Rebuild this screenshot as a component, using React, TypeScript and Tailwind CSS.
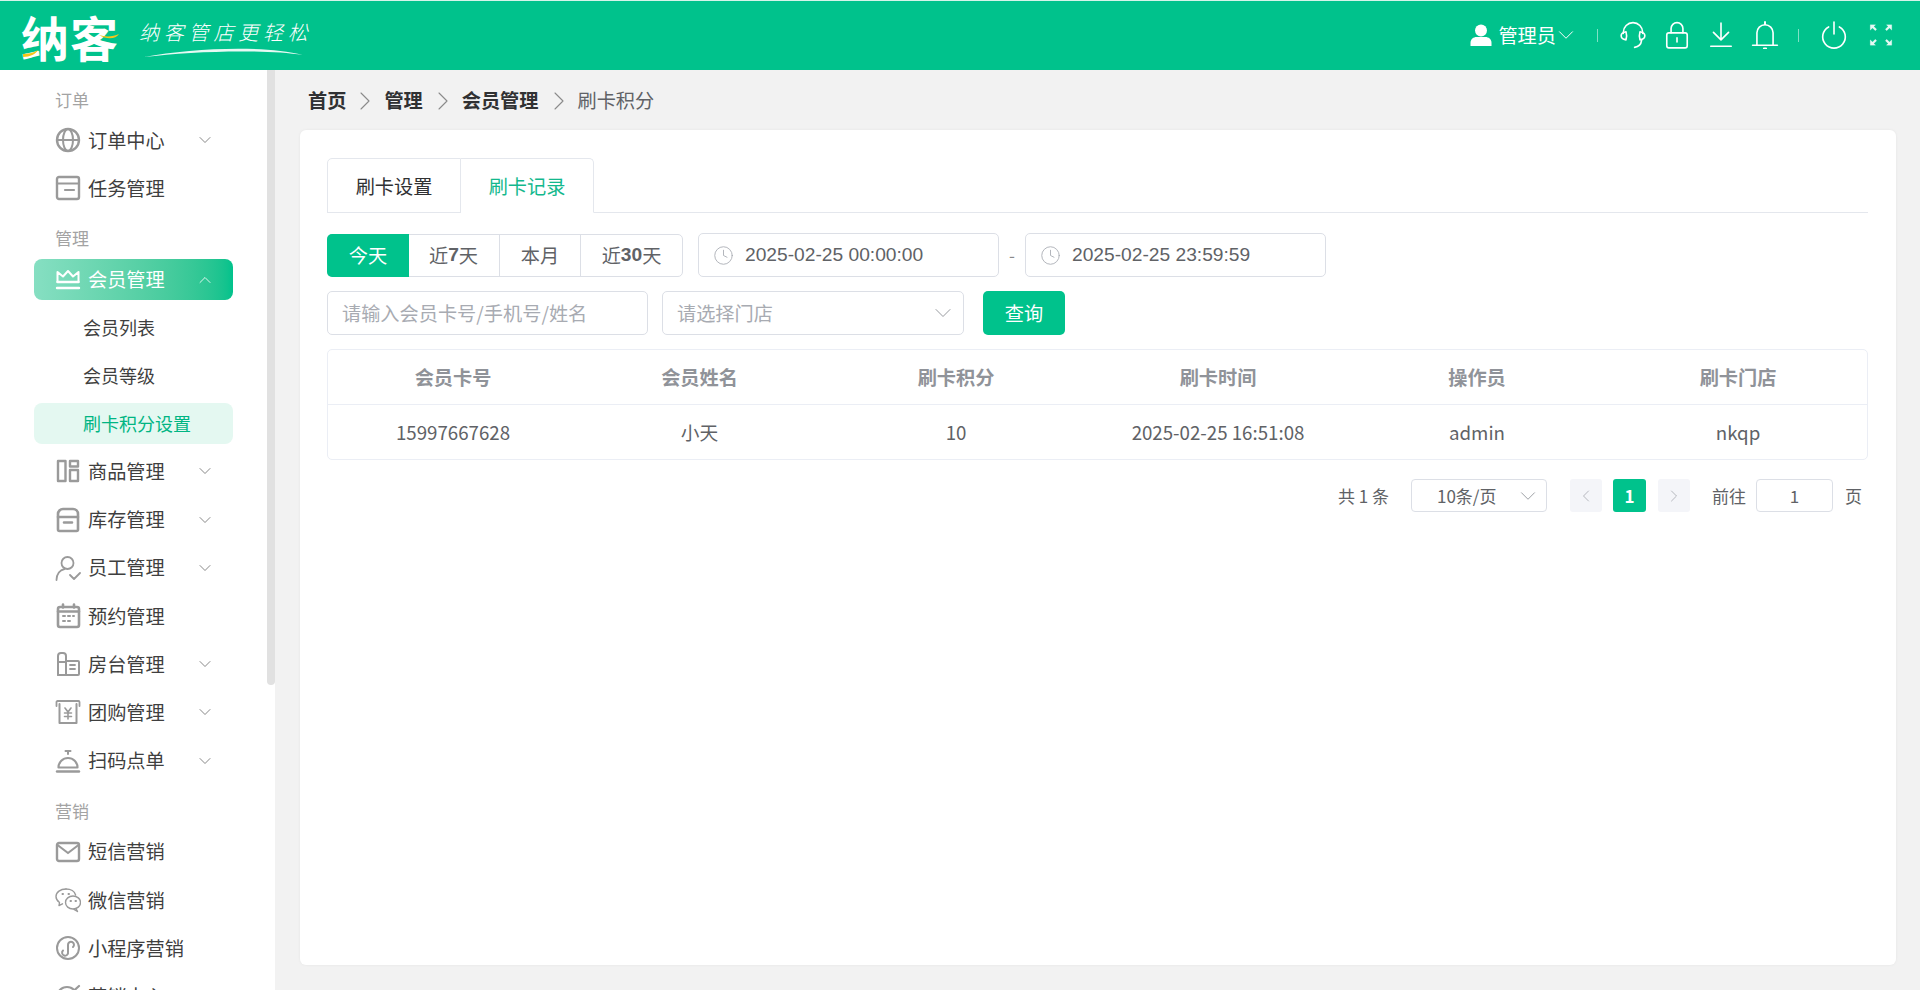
import { ChevronDown, ChevronLeft, ChevronRight, ChevronUp, Clock } from "lucide-react";
import type { ReactNode } from "react";

function Ic({ children, className = "text-[#9a9a9a]" }: { children: ReactNode; className?: string }) {
  return (
    <svg viewBox="0 0 26 26" width="26" height="26" fill="none" stroke="currentColor" strokeWidth="2" strokeLinecap="round" strokeLinejoin="round" className={`shrink-0 ${className}`}>
      {children}
    </svg>
  );
}

const GlobeIcon = () => (
  <Ic>
    <circle cx="13" cy="13" r="11" strokeWidth="2.4" />
    <ellipse cx="13" cy="13" rx="5" ry="11" strokeWidth="2" />
    <path d="M2 13h22" strokeWidth="2" />
  </Ic>
);
const TaskIcon = () => (
  <Ic>
    <rect x="2" y="2" width="22" height="22" rx="2" strokeWidth="2.4" />
    <path d="M2 8.500h22M10 15h9" strokeWidth="2.200" />
  </Ic>
);
const CrownIcon = () => (
  <Ic className="text-white">
    <path d="M2.500 15V5l5.500 4.500L13 4l5 5.500L23.500 5v10" strokeWidth="2" />
    <path d="M2.500 15h21M2 21h22" strokeWidth="2.400" />
  </Ic>
);
const GoodsIcon = () => (
  <Ic>
    <rect x="3" y="3" width="7.500" height="20" strokeWidth="2.400" />
    <rect x="15" y="3" width="8" height="5.500" strokeWidth="2.400" />
    <rect x="15" y="12" width="8" height="11" strokeWidth="2.400" />
  </Ic>
);
const BoxIcon = () => (
  <Ic>
    <path d="M3 10V7a5 5 0 0 1 5-5h10a5 5 0 0 1 5 5v3z" strokeWidth="2.600" />
    <path d="M3 10v12.500a1.500 1.500 0 0 0 1.500 1.500h17a1.500 1.500 0 0 0 1.500-1.500V10M9 15.500h8" strokeWidth="2.600" />
  </Ic>
);
const StaffIcon = () => (
  <Ic>
    <circle cx="12.500" cy="8" r="6" strokeWidth="1.800" />
    <path d="M1.500 25c0-6 3.500-10 8-11M15 20l4 4 6-6" strokeWidth="1.800" />
  </Ic>
);
const CalendarIcon = () => (
  <Ic>
    <rect x="3" y="4" width="21" height="20" rx="2" strokeWidth="2.600" />
    <path d="M3 8.500h21M8 1.500v3M19 1.500v3" strokeWidth="2.600" />
    <path d="M8 13h2M13 13h2M18 13h1M8 18h2M13 18h2" strokeWidth="2" />
  </Ic>
);
const RoomIcon = () => (
  <Ic>
    <path d="M3 24V5a3 3 0 0 1 3-3h2a3 3 0 0 1 3 3v19z" strokeWidth="2" />
    <path d="M3 11h8M11 10h12a1 1 0 0 1 1 1v12a1 1 0 0 1-1 1H3" strokeWidth="2" />
    <path d="M15 14h5M15 18h5" strokeWidth="1.800" />
  </Ic>
);
const GrouponIcon = () => (
  <Ic>
    <path d="M1.500 7V3a1 1 0 0 1 1-1h21a1 1 0 0 1 1 1v4" strokeWidth="1.800" />
    <path d="M4.500 5v19h17V5" strokeWidth="2" />
    <path d="M10 9l3 4 3-4M9.500 14h7M9.500 17.500h7M13 13v7" strokeWidth="1.600" />
  </Ic>
);
const BellDeskIcon = () => (
  <Ic>
    <path d="M10.500 3h5M13 3v3" strokeWidth="2" />
    <path d="M3.500 19.500a9.500 9.500 0 0 1 19 0z" strokeWidth="2.200" />
    <path d="M2 23.500h22" strokeWidth="2.400" />
  </Ic>
);
const MailIcon = () => (
  <Ic>
    <rect x="2" y="4" width="22" height="18" rx="2" strokeWidth="2.400" />
    <path d="M2.500 6l10.500 8 10.500-8" strokeWidth="2.200" />
  </Ic>
);
const WechatIcon = () => (
  <Ic>
    <path d="M11 2C5.500 2 1 5.200 1 9.500c0 2.500 1.500 4.600 3.500 6L4 18.500l3.500-1.700" strokeWidth="1.400" />
    <path d="M11 2c4.800 0 8.700 2.500 9.600 6" strokeWidth="1.400" />
    <ellipse cx="18" cy="15.500" rx="7.500" ry="6.500" strokeWidth="1.400" />
    <path d="M21 21.500l1.500 3-3.500-2.200" strokeWidth="1.400" />
    <path d="M7.500 7h.5M13.500 7h.5M15.500 14h.5M20.500 14h.5" strokeWidth="2" />
  </Ic>
);
const MiniIcon = () => (
  <Ic>
    <circle cx="13" cy="13" r="11" strokeWidth="2" />
    <path d="M8 15.500a3 3 0 1 0 5 1.500V10a3 3 0 1 1 5 2" strokeWidth="2" />
  </Ic>
);
const TargetIcon = () => (
  <Ic>
    <circle cx="12" cy="14" r="10" strokeWidth="2.200" />
    <circle cx="12" cy="14" r="4" strokeWidth="2" />
    <path d="M13 13L24 3" strokeWidth="2.200" />
  </Ic>
);

function MenuRow({ icon, label, arrow }: { icon: ReactNode; label: string; arrow?: boolean }) {
  return (
    <div className="h-[48.2px] ml-[55px] w-[178px] flex items-center shrink-0">
      <span className="w-[26px] flex justify-center">{icon}</span>
      <span className="ml-[7px] text-[19.2px] text-[#3f3f3f] whitespace-nowrap flex-1">{label}</span>
      {arrow && <ChevronDown size={20} strokeWidth={1} className="text-[#707070] mr-[18px]" />}
    </div>
  );
}

function GroupLabel({ text, first }: { text: string; first?: boolean }) {
  return (
    <div className={`${first ? "h-[46px] pb-[4px]" : "h-[43px] pb-[5px]"} shrink-0 pl-[55px] flex items-end text-[17px] leading-[24px] text-[#a3a3a3]`}>
      {text}
    </div>
  );
}

function Sidebar() {
  return (
    <aside className="relative w-[275px] h-[920px] shrink-0 bg-white overflow-hidden flex flex-col">
      <GroupLabel text="订单" first />
      <MenuRow icon={<GlobeIcon />} label="订单中心" arrow />
      <MenuRow icon={<TaskIcon />} label="任务管理" />
      <GroupLabel text="管理" />
      <div className="h-[48px] pt-[1px] shrink-0 flex items-center">
        <div className="ml-[34px] w-[199px] h-[41px] rounded-[8px] bg-gradient-to-r from-[#86dfc2] to-[#00c28c] flex items-center pl-[21px]">
          <CrownIcon />
          <span className="ml-[7px] text-[19.2px] text-white flex-1">会员管理</span>
          <ChevronUp size={20} strokeWidth={1} className="text-white mr-[18px]" />
        </div>
      </div>
      <div className="h-[48px] shrink-0 pl-[83px] flex items-center text-[18px] text-[#3f3f3f]">会员列表</div>
      <div className="h-[48px] shrink-0 pl-[83px] flex items-center text-[18px] text-[#3f3f3f]">会员等级</div>
      <div className="h-[48px] shrink-0 flex items-center">
        <div className="ml-[34px] w-[199px] h-[41px] rounded-[8px] bg-[#e4f8f1] pl-[49px] flex items-center text-[18px] text-[#00b583] whitespace-nowrap">刷卡积分设置</div>
      </div>
      <MenuRow icon={<GoodsIcon />} label="商品管理" arrow />
      <MenuRow icon={<BoxIcon />} label="库存管理" arrow />
      <MenuRow icon={<StaffIcon />} label="员工管理" arrow />
      <MenuRow icon={<CalendarIcon />} label="预约管理" />
      <MenuRow icon={<RoomIcon />} label="房台管理" arrow />
      <MenuRow icon={<GrouponIcon />} label="团购管理" arrow />
      <MenuRow icon={<BellDeskIcon />} label="扫码点单" arrow />
      <GroupLabel text="营销" />
      <MenuRow icon={<MailIcon />} label="短信营销" />
      <MenuRow icon={<WechatIcon />} label="微信营销" />
      <MenuRow icon={<MiniIcon />} label="小程序营销" />
      <MenuRow icon={<TargetIcon />} label="营销中心" />
      {/* scrollbar thumb */}
      <div className="absolute right-0 top-0 w-[8px] h-[615px] bg-[#e1e1e1] rounded-b-[4px]" />
    </aside>
  );
}

function Header() {
  return (
    <header className="h-[70px] shrink-0 bg-[#00c28c] border-t border-[#d5f4ea] flex items-center text-white">
      <div className="relative ml-[21px] w-[102px] h-[56px] flex items-center">
        <span className="text-[48px] leading-[56px] font-bold tracking-[1px] whitespace-nowrap">纳客</span>
        <svg viewBox="0 0 102 56" className="absolute inset-0" width="102" height="56" fill="#f5c518" stroke="none">
          <path d="M2 46c4 0 10-1 15-4-2 4-8 7-15 7zM78 27c6 2 14 2 20-1-3 5-12 6-20 1z" />
        </svg>
      </div>
      <div className="relative ml-[16px] w-[175px] h-[50px] pt-[7px]">
        <span className="block text-[20px] leading-[28px] tracking-[4.800px] font-light italic whitespace-nowrap">纳客管店更轻松</span>
        <svg viewBox="0 0 175 12" width="175" height="12" className="absolute left-[4px] top-[36px]" fill="#ffffff" stroke="none" opacity="0.9">
          <path d="M1 10C50 1 120-2 160 8 120 2 50 4 1 10z" />
        </svg>
      </div>

      <div className="ml-auto flex items-center">
        <svg viewBox="0 0 22 22" width="22" height="22" fill="currentColor">
          <circle cx="11" cy="6.500" r="6" />
          <path d="M0.500 22v-3c0-4 3-6 6-6h9c3 0 6 2 6 6v3z" />
        </svg>
        <span className="ml-[6px] text-[19.2px]">管理员</span>
        <ChevronDown size={26} strokeWidth={0.9} className="-ml-[3px]" />
        <span className="ml-[18px] w-px h-[13px] bg-white/50" />
        <div className="ml-[21px] flex items-center gap-[16px]">
          <Ic className="text-white w-[28px] h-[28px]">
            <path d="M4 11.500V10.500a9 9 0 0 1 18 0v1" strokeWidth="1.500" />
            <path d="M6.500 10C3.500 10.500 2 12 2 13.700s1.500 3.300 4.500 3.800c.7-2.300.7-5.200 0-7.500zM19.500 10c3 .5 4.500 2 4.500 3.700s-1.500 3.300-4.500 3.800c-.7-2.300-.7-5.200 0-7.500z" strokeWidth="1.500" />
            <path d="M21 18c-.5 3.500-3 6-6.500 6.500" strokeWidth="1.500" />
          </Ic>
          <Ic className="text-white w-[28px] h-[28px]">
            <rect x="3.500" y="11" width="19" height="14" rx="2" strokeWidth="1.500" />
            <path d="M7.500 11V7a5.500 5.500 0 0 1 11 0v4M13 15.500v4" strokeWidth="1.500" />
          </Ic>
          <Ic className="text-white w-[28px] h-[28px]">
            <path d="M13 2v15M6 10.500l7 7 7-7M3.500 23.500h19" strokeWidth="1.500" />
          </Ic>
          <Ic className="text-white w-[28px] h-[28px]">
            <path d="M5.500 22V11a7.500 7.500 0 0 1 15 0v11M1.500 22.500h23" strokeWidth="1.500" />
            <path d="M13 1v2M12 25.500h2" strokeWidth="1.800" />
          </Ic>
        </div>
        <span className="ml-[19px] w-px h-[13px] bg-white/50" />
        <div className="ml-[21px] flex items-center gap-[19px] mr-[25px]">
          <Ic className="text-white w-[28px] h-[28px]">
            <path d="M8 5.500a10.500 10.500 0 1 0 10 0M13 1v11" strokeWidth="1.500" />
          </Ic>
          <svg viewBox="0 0 26 26" width="28" height="28" fill="#ffffff" stroke="#ffffff" strokeWidth="0.200" opacity="0.9">
            <path d="M3 3.500h5L6.400 5.100 9 7.700 7.700 9 5.100 6.400 3 8.500zM23 3.500h-5l1.600 1.600L17 7.700 18.300 9l2.600-2.600L23 8.500zM3 22.500h5l-1.600-1.600L9 18.300 7.700 17l-2.600 2.600L3 17.500zM23 22.500h-5l1.600-1.600-2.600-2.600 1.300-1.300 2.600 2.600 2.100-2.100z" />
          </svg>
        </div>
      </div>
    </header>
  );
}

function Crumbs() {
  const sep = <ChevronRight size={32} strokeWidth={0.8} className="text-[#8a8a8a] mx-[3px]" />;
  return (
    <div className="h-[60px] shrink-0 pl-[8px] flex items-center text-[19.2px] pt-[1px]">
      <b className="font-bold text-[#303133]">首页</b>
      {sep}
      <b className="font-bold text-[#303133] mr-[1px]">管理</b>
      {sep}
      <b className="font-bold text-[#303133] mr-[1px]">会员管理</b>
      {sep}
      <span className="text-[#606266]">刷卡积分</span>
    </div>
  );
}

function DateBox({ value }: { value: string }) {
  return (
    <div className="w-[301px] h-[44px] border border-[#dcdfe6] rounded-[5px] flex items-center pl-[14px]">
      <Clock size={21} strokeWidth={1} className="text-[#a8abb2]" />
      <span className="ml-[11px] text-[19.2px] text-[#606266] font-['Liberation_Sans',sans-serif] whitespace-nowrap">{value}</span>
    </div>
  );
}

const columns = ["会员卡号", "会员姓名", "刷卡积分", "刷卡时间", "操作员", "刷卡门店"];
const row = ["15997667628", "小天", "10", "2025-02-25 16:51:08", "admin", "nkqp"];
const grid = "grid grid-cols-[250px_243px_270px_254px_264px_1fr]";

function Card() {
  return (
    <div className="h-[835px] bg-white rounded-[6px] pt-[28px] pl-[27px] pr-[28px] shadow-[0_0_3px_rgba(0,0,0,0.06)]">
      {/* tabs */}
      <div className="h-[55px] border-b border-[#e4e7ed] flex">
        <div className="h-[55px] pt-[1px] w-[134px] border border-[#e4e7ed] rounded-tl-[5px] flex items-center justify-center text-[19.2px] text-[#303133]">刷卡设置</div>
        <div className="h-[55px] pt-[1px] w-[133px] border border-l-0 border-b-white border-[#e4e7ed] rounded-tr-[5px] flex items-center justify-center text-[19.2px] text-[#13b88d]">刷卡记录</div>
      </div>

      {/* date filters */}
      <div className="mt-[20px] flex items-center h-[44px]">
        <div className="flex h-[43px] w-[356px] border border-[#dcdfe6] rounded-[5px] text-[19.2px] text-[#606266]">
          <div className="w-[82px] -m-px h-[43px] bg-[#00c28c] text-white rounded-l-[5px] flex items-center justify-center">今天</div>
          <div className="w-[92px] border-r border-[#dcdfe6] flex items-center justify-center">近<b className="font-['Liberation_Sans'] font-bold">7</b>天</div>
          <div className="w-[81px] border-r border-[#dcdfe6] flex items-center justify-center">本月</div>
          <div className="flex-1 flex items-center justify-center">近<b className="font-['Liberation_Sans'] font-bold">30</b>天</div>
        </div>
        <div className="ml-[15px]"><DateBox value="2025-02-25 00:00:00" /></div>
        <span className="w-[26px] text-center text-[#8a8a8a] text-[17px]">-</span>
        <DateBox value="2025-02-25 23:59:59" />
      </div>

      {/* search row */}
      <div className="mt-[14px] flex items-center h-[44px]">
        <div className="w-[321px] h-[44px] border border-[#dcdfe6] rounded-[5px] pl-[14px] flex items-center text-[19.2px] text-[#a8abb2] whitespace-nowrap">请输入会员卡号/手机号/姓名</div>
        <div className="ml-[14px] w-[302px] h-[44px] border border-[#dcdfe6] rounded-[5px] pl-[14px] pr-[6px] flex items-center justify-between text-[19.2px] text-[#a8abb2]">
          请选择门店
          <ChevronDown size={28} strokeWidth={0.8} className="text-[#8f9297]" />
        </div>
        <div className="ml-[19px] w-[82px] h-[44px] rounded-[5px] bg-[#00c28c] text-white text-[19.2px] flex items-center justify-center">查询</div>
      </div>

      {/* table */}
      <div className="mt-[14px] w-full border border-[#ebeef5] rounded-[5px]">
        <div className={`${grid} h-[55px] border-b border-[#ebeef5] items-center text-center text-[19.2px] font-bold text-[#909399]`}>
          {columns.map((c) => <div key={c}>{c}</div>)}
        </div>
        <div className={`${grid} h-[54px] items-center text-center text-[18.7px] text-[#606266]`}>
          {row.map((c) => <div key={c}>{c}</div>)}
        </div>
      </div>

      {/* pagination */}
      <div className="mt-[19px] h-[33px] flex items-center justify-end pr-[6px] text-[17px] text-[#606266]">
        <span>共 1 条</span>
        <div className="ml-[22px] w-[136px] h-[33px] border border-[#dcdfe6] rounded-[4px] pl-[25px] pr-[5px] flex items-center justify-between">
          10条/页
          <ChevronDown size={26} strokeWidth={0.8} className="text-[#8f9297]" />
        </div>
        <div className="ml-[23px] w-[32px] h-[33px] rounded-[3px] bg-[#f4f5f9] flex items-center justify-center">
          <ChevronLeft size={20} strokeWidth={1} className="text-[#a8abb2]" />
        </div>
        <div className="ml-[11px] w-[33px] h-[33px] rounded-[3px] bg-[#00c28c] text-white font-bold flex items-center justify-center">1</div>
        <div className="ml-[12px] w-[32px] h-[33px] rounded-[3px] bg-[#f4f5f9] flex items-center justify-center">
          <ChevronRight size={20} strokeWidth={1} className="text-[#a8abb2]" />
        </div>
        <span className="ml-[22px]">前往</span>
        <div className="ml-[10px] w-[77px] h-[33px] border border-[#dcdfe6] rounded-[4px] flex items-center justify-center">1</div>
        <span className="ml-[12px]">页</span>
      </div>
    </div>
  );
}

export default function App() {
  return (
    <div className="w-full h-screen overflow-hidden flex flex-col bg-[#f2f2f2] font-['Noto_Sans_CJK_SC','Liberation_Sans',sans-serif]">
      <Header />
      <div className="flex flex-1 min-h-0">
        <Sidebar />
        <main className="flex-1 pl-[25px] pr-[24px]">
          <Crumbs />
          <Card />
        </main>
      </div>
    </div>
  );
}
